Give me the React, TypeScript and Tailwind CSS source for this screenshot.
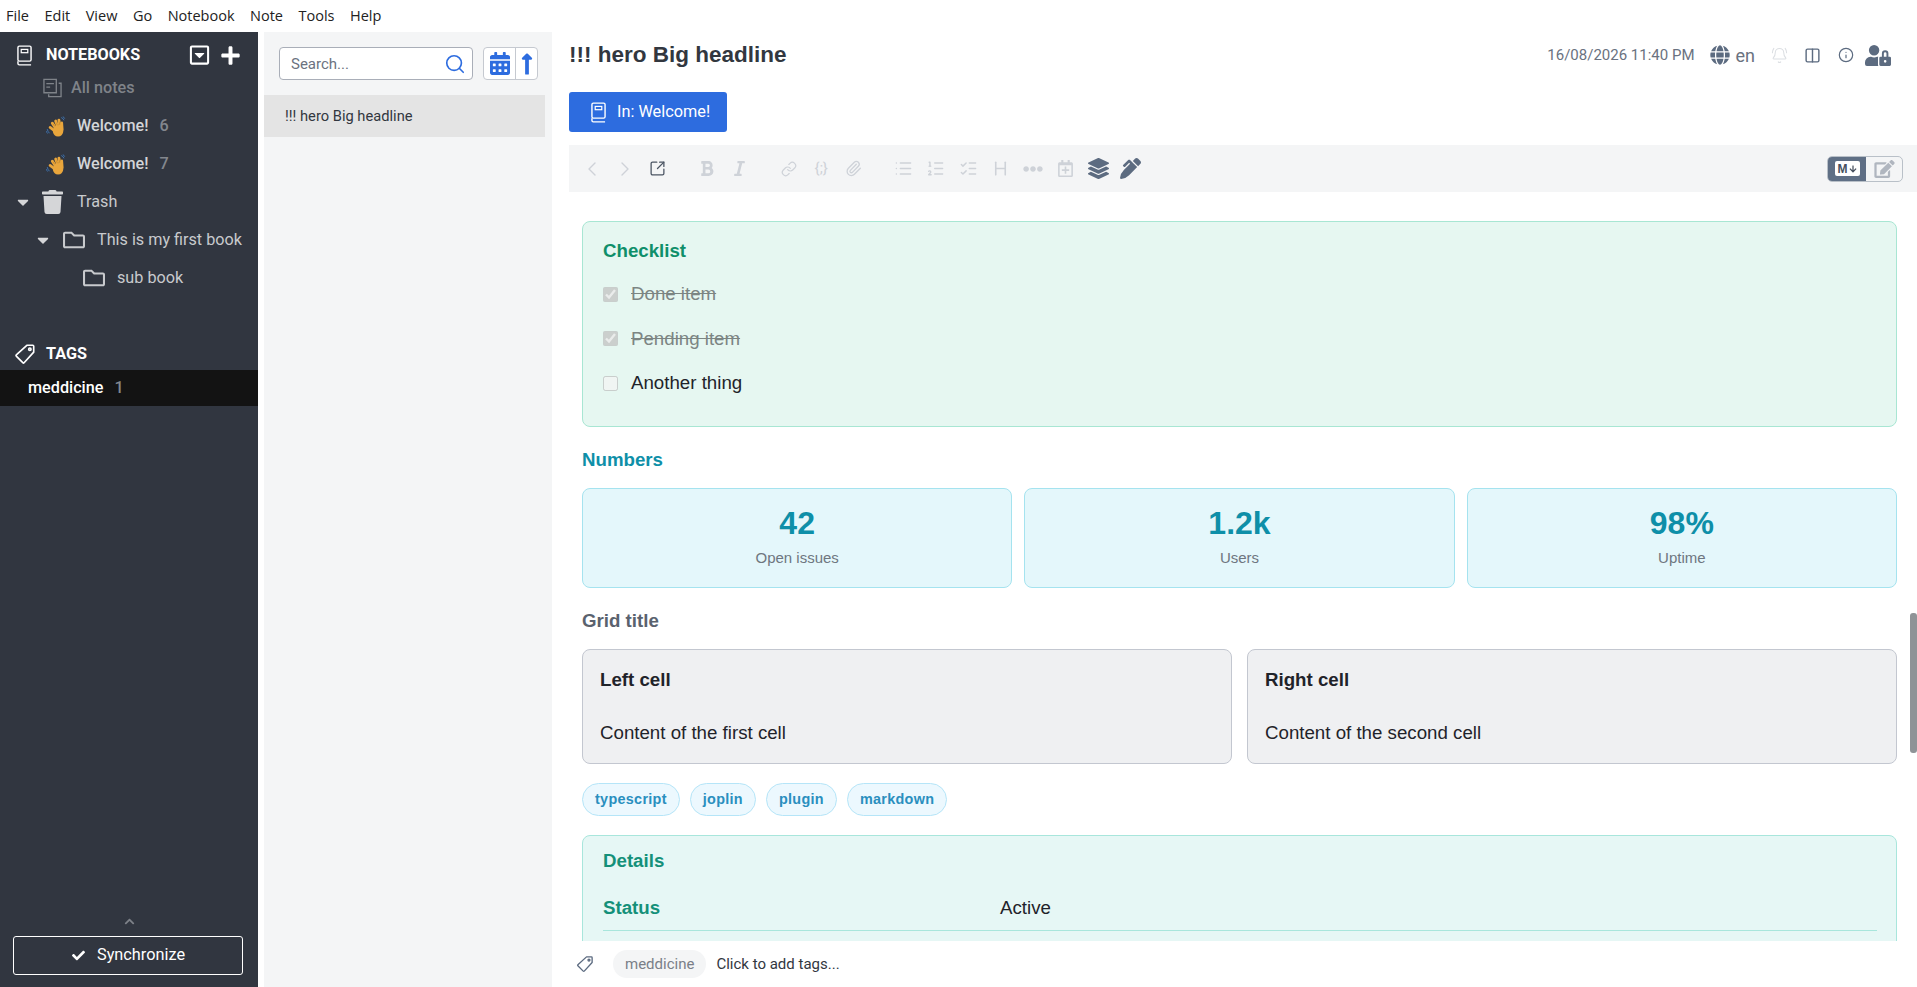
import React from "react";
import { FaCaretDown, FaPlus, FaRegCaretSquareDown, FaTrash, FaRegFolder, FaCheck, FaChevronUp, FaCalendarAlt, FaLongArrowAltUp, FaBold, FaItalic, FaEllipsisH, FaRegCalendarPlus, FaLayerGroup, FaPenAlt, FaGlobe, FaUserLock, FaEdit, FaArrowDown } from "react-icons/fa";
import { Search, ChevronLeft, ChevronRight, SquareArrowOutUpRight, Link, Paperclip, List, ListOrdered, ListChecks, BellRing, Columns2, Info, Heading } from "lucide-react";

const Book = ({ className = "" }: { className?: string }) => (
  <svg viewBox="0 0 16 22" className={className} fill="none" stroke="currentColor" strokeWidth="1.500">
    <rect x="1" y="1" width="14" height="16" rx="1.500" />
    <path d="M1 17v2.500A1.500 1.500 0 0 0 2.500 21H15" />
    <rect x="4.500" y="4.500" width="7" height="3.500" strokeWidth="1.300" />
  </svg>
);

const AllNotes = () => (
  <svg viewBox="0 0 20 20" className="w-[19px] h-[20px] text-[#7f8389]" fill="none" stroke="currentColor" strokeWidth="1.400">
    <path d="M1 1h13v14H1z" />
    <path d="M16.500 5H19v14H6v-2.500" />
    <path d="M3.500 5.500h8M3.500 9h4" strokeWidth="1.300" />
  </svg>
);

const Hand = () => (
  <svg viewBox="0 0 20 20" className="w-[21px] h-[21px]">
    <path d="M1.200 12.500c.3 1.600 1 2.900 2.100 3.900M.3 14.500c.3.900.7 1.600 1.300 2.200" stroke="#3f75b5" strokeWidth=".9" fill="none" />
    <path d="M14.500 1.500c1.300.4 2.200 1.300 2.600 2.600M16 .7c.9.3 1.500.9 1.800 1.800" stroke="#3f75b5" strokeWidth=".9" fill="none" />
    <g stroke="#e9a63c" strokeLinecap="round" fill="none">
      <path d="M8 14 3.900 10.800" strokeWidth="2.600" />
      <path d="M9.500 12 6 6.800" strokeWidth="2.700" />
      <path d="M11.500 11 9.200 4.800" strokeWidth="2.700" />
      <path d="M13.500 11 12.300 4" strokeWidth="2.700" />
      <path d="M15.500 13 15 6.500" strokeWidth="2.500" />
    </g>
    <ellipse cx="11.500" cy="14.300" rx="5" ry="5.200" fill="#e9a63c" />
    <path d="M8.200 9.800 6.800 7.600M10.800 8.800 9.900 6.300M13.100 8.500l-.5-3" stroke="#b97a1c" strokeWidth=".5" fill="none" />
  </svg>
);

const TagOutline = ({ className = "" }: { className?: string }) => (
  <svg viewBox="0 0 24 24" className={className} fill="none" stroke="currentColor" strokeWidth="1.800" strokeLinejoin="round">
    <path d="M14 2.500h6.500a1 1 0 0 1 1 1V10L11 21.500a1 1 0 0 1-1.400 0L2.500 14.400a1 1 0 0 1 0-1.400z" />
    <circle cx="17.300" cy="6.700" r="1.300" />
  </svg>
);

const Item = ({ pl, children, dim }: { pl: string; children: React.ReactNode; dim?: boolean }) => (
  <div className={`flex items-center h-[38px] ${pl} ${dim ? "text-[#7f8389]" : "text-[#c8cacd]"}`}>{children}</div>
);

const Sidebar = () => (
  <aside className="w-[258px] shrink-0 h-full bg-[#313640] flex flex-col text-[16.200px]">
    <div className="flex items-center h-[37px] pt-[9px] pl-[17px] pr-[17px] text-white">
      <Book className="w-[15px] h-[21px]" />
      <span className="ml-[14px] font-bold flex-1">NOTEBOOKS</span>
      <FaRegCaretSquareDown className="w-[21px] h-[22px] mr-[10px]" />
      <FaPlus className="w-[21px] h-[21px]" />
    </div>
    <Item pl="pl-[43px]" dim><AllNotes /><span className="ml-[9px] font-medium">All notes</span></Item>
    <Item pl="pl-[46px]"><Hand /><span className="ml-[10px] font-medium text-[#d3d5d8]">Welcome!</span><span className="ml-[11px] text-[#83878e] font-medium">6</span></Item>
    <Item pl="pl-[46px]"><Hand /><span className="ml-[10px] font-medium text-[#d3d5d8]">Welcome!</span><span className="ml-[11px] text-[#83878e] font-medium">7</span></Item>
    <Item pl="pl-[16px]"><FaCaretDown className="w-[14px] h-[18px] text-[#d5d6d8]" /><FaTrash className="ml-[12px] w-[21px] h-[24px] text-[#d5d6d8]" /><span className="ml-[14px]">Trash</span></Item>
    <Item pl="pl-[36px]"><FaCaretDown className="w-[14px] h-[18px] text-[#d5d6d8]" /><FaRegFolder className="ml-[12px] w-[24px] h-[22px]" /><span className="ml-[11px] whitespace-nowrap">This is my first book</span></Item>
    <Item pl="pl-[82px]"><FaRegFolder className="w-[24px] h-[22px]" /><span className="ml-[11px]">sub book</span></Item>
    <div className="flex items-center h-[38px] mt-[38px] pl-[14px] text-white">
      <TagOutline className="w-[22px] h-[22px]" />
      <span className="ml-[10px] font-bold">TAGS</span>
    </div>
    <div className="flex items-center h-[36px] mt-[-3px] pl-[28px] bg-[#131313] text-white font-medium">
      <span>meddicine</span><span className="ml-[11px] text-[#83878e]">1</span>
    </div>
    <div className="flex-1" />
    <div className="flex justify-center h-[12px] items-center mb-[9px] text-[#7d8188]"><FaChevronUp className="w-[15px] h-[11px]" /></div>
    <div className="mx-[13px] w-[230px] h-[39px] mb-[12px] rounded-[3px] border border-white flex items-center justify-center text-white text-[16.300px]">
      <FaCheck className="w-[15px] h-[13px] mr-[11px]" /><span>Synchronize</span>
    </div>
  </aside>
);

const NoteList = () => (
  <section className="ml-[6px] w-[288px] shrink-0 h-full bg-[#f4f5f6] flex flex-col">
    <div className="flex items-center h-[63px] pl-[15px]">
      <div className="w-[194px] h-[33px] bg-white border border-[#a9aeb8] rounded-[4px] flex items-center pl-[11px] pr-[6px] text-[15px] text-[#6b7280]">
        <span className="flex-1 pt-[1px]">Search...</span>
        <Search className="w-[22px] h-[22px] text-[#2d6cdf]" strokeWidth={1.800} />
      </div>
      <div className="ml-[10px] w-[55px] h-[33px] bg-white border border-[#c5c9d0] rounded-[4px] flex items-center text-[#2d6cdf]">
        <div className="w-[32px] h-full flex items-center justify-center border-r border-[#c5c9d0]"><FaCalendarAlt className="w-[20px] h-[23px]" /></div>
        <div className="flex-1 flex items-center justify-center"><FaLongArrowAltUp className="w-[14px] h-[24px]" /></div>
      </div>
    </div>
    <div className="w-[281px] h-[42px] bg-[#e4e4e4] flex items-center pl-[21px] text-[14.700px] text-[#32373f]">!!! hero Big headline</div>
  </section>
);

const T = ({ children, on, w = "w-[32.500px]" }: { children: React.ReactNode; on?: boolean; w?: string }) => (
  <div className={`${w} flex items-center justify-center shrink-0 ${on ? "text-[#5c6b80]" : "text-[#ced2d8]"}`}>{children}</div>
);

const Toolbar = () => (
  <div className="ml-[17px] h-[47px] bg-[#f4f5f6] flex items-center pl-[7px] pr-[14px]">
    <T><ChevronLeft className="w-[24px] h-[24px]" strokeWidth={1.400} /></T>
    <T><ChevronRight className="w-[24px] h-[24px]" strokeWidth={1.400} /></T>
    <T on><SquareArrowOutUpRight className="w-[17px] h-[17px] text-[#4b5563]" strokeWidth={1.800} /></T>
    <div className="w-[17px]" />
    <T><FaBold className="w-[14px] h-[17px]" /></T>
    <T><FaItalic className="w-[11px] h-[17px]" /></T>
    <div className="w-[17px]" />
    <T><Link className="w-[16px] h-[16px]" strokeWidth={1.800} /></T>
    <T><span className="text-[15px]">{"{;}"}</span></T>
    <T><Paperclip className="w-[17px] h-[17px]" strokeWidth={1.800} /></T>
    <div className="w-[17px]" />
    <T><List className="w-[19px] h-[19px]" strokeWidth={1.800} /></T>
    <T><ListOrdered className="w-[19px] h-[19px]" strokeWidth={1.800} /></T>
    <T><ListChecks className="w-[19px] h-[19px]" strokeWidth={1.800} /></T>
    <T><Heading className="w-[19px] h-[19px]" strokeWidth={2} /></T>
    <T><FaEllipsisH className="w-[20px] h-[20px]" /></T>
    <T><FaRegCalendarPlus className="w-[15px] h-[17px]" /></T>
    <T on><FaLayerGroup className="w-[21px] h-[21px]" /></T>
    <T on><FaPenAlt className="w-[21px] h-[21px]" /></T>
    <div className="flex-1" />
    <div className="flex w-[76px] h-[26px] rounded-[5px] border border-[#b9c0c8] overflow-hidden">
      <div className="w-[38px] bg-[#5f6f85] flex items-center justify-center">
        <div className="w-[25px] h-[15px] bg-white rounded-[2px] flex items-center justify-center text-[#46505e]" style={{ fontFamily: "'Liberation Sans', sans-serif" }}>
          <span className="text-[12px] font-bold leading-none">M</span><FaArrowDown className="w-[8px] h-[8px] ml-[1px]" />
        </div>
      </div>
      <div className="flex-1 flex items-center justify-center text-[#b0b6bf]"><FaEdit className="w-[21px] h-[18px]" /></div>
    </div>
  </div>
);

const Stat = ({ n, l }: { n: string; l: string }) => (
  <div className="h-[100px] bg-[#e4f7fb] border border-[#a5e3ef] rounded-[8px] flex flex-col items-center">
    <div className="h-[62px] pt-[5px] flex items-center text-[32px] font-bold text-[#0e8fa8]">{n}</div>
    <div className="text-[15px] text-[#6e7680] leading-[18px] mt-[-2px]">{l}</div>
  </div>
);

const Cell = ({ t, c }: { t: string; c: string }) => (
  <div className="h-[115px] bg-[#eff0f2] border border-[#c3c7d0] rounded-[8px] px-[17px] text-[#1f232a]">
    <div className="h-[59px] pt-[2px] flex items-center font-bold">{t}</div>
    <div className="h-[36px] flex items-center text-[#1f232a] mt-[6px]">{c}</div>
  </div>
);

const Pill = ({ t }: { t: string }) => (
  <span className="h-[33px] px-[12px] bg-[#ecf8fe] border border-[#b5e5f8] rounded-full flex items-center text-[14.400px] font-bold text-[#2a8fbe] tracking-[0.3px]">{t}</span>
);

const Check = ({ done, t }: { done?: boolean; t: string }) => (
  <div className={`flex items-center h-[44.500px] ${done ? "text-[#7c8583] line-through" : "text-[#1f232a]"}`}>
    <input type="checkbox" checked={!!done} disabled readOnly className="w-[15px] h-[15px] m-0 shrink-0" />
    <span className="ml-[13px]">{t}</span>
  </div>
);

const Viewer = () => (
  <div className="flex-1 min-h-0 overflow-hidden pl-[30px] pr-[20px] pt-[29px] relative text-[18.700px]" style={{ fontFamily: "'Liberation Sans', Arial, sans-serif" }}>
    <div className="h-[206px] bg-[#e6f7f1] border border-[#a8e6d3] rounded-[8px] pl-[20px]">
      <div className="h-[40px] pt-[18px] flex items-center font-bold text-[#0f8f6a]">Checklist</div>
      <div className="mt-[10px]">
        <Check done t="Done item" />
        <Check done t="Pending item" />
        <Check t="Another thing" />
      </div>
    </div>
    <div className="h-[28px] mt-[19px] flex items-center font-bold text-[#0e8fa8]">Numbers</div>
    <div className="grid grid-cols-3 gap-[12px] mt-[14px]">
      <Stat n="42" l="Open issues" />
      <Stat n="1.2k" l="Users" />
      <Stat n="98%" l="Uptime" />
    </div>
    <div className="h-[28px] mt-[19px] flex items-center font-bold text-[#5a626e]">Grid title</div>
    <div className="grid grid-cols-2 gap-[15px] mt-[14px]">
      <Cell t="Left cell" c="Content of the first cell" />
      <Cell t="Right cell" c="Content of the second cell" />
    </div>
    <div className="flex gap-[10px] mt-[19px]">
      <Pill t="typescript" /><Pill t="joplin" /><Pill t="plugin" /><Pill t="markdown" />
    </div>
    <div className="h-[200px] mt-[19px] bg-[#e6f7f5] border border-[#a8e6dc] rounded-t-[8px] pl-[20px] pr-[19px]">
      <div className="h-[51px] flex items-center font-bold text-[#149079]">Details</div>
      <div className="h-[44px] flex items-center border-b border-[#a8e6dc]">
        <span className="w-[397px] font-bold text-[#149079]">Status</span>
        <span className="text-[#1f232a]">Active</span>
      </div>
    </div>
    <div className="absolute right-0 top-[421px] w-[7px] h-[140px] rounded-[3px] bg-[#8f9397]" />
  </div>
);

const Header = () => (
  <div className="h-[46px] flex items-center pl-[17px] pr-[26px]">
    <h1 className="flex-1 text-[22.500px] font-bold text-[#32373f]" style={{ fontFamily: "'Liberation Sans', Arial, sans-serif" }}>!!! hero Big headline</h1>
    <span className="text-[15px] text-[#6a7280]">16/08/2026 11:40 PM</span>
    <FaGlobe className="ml-[15px] w-[20px] h-[20px] text-[#5c6b80]" />
    <span className="ml-[6px] text-[18px] text-[#6a7280]">en</span>
    <BellRing className="ml-[16px] w-[17px] h-[17px] text-[#dcdfe3]" strokeWidth={1.500} />
    <Columns2 className="ml-[16px] w-[17px] h-[17px] text-[#5c6b80]" strokeWidth={2} />
    <Info className="ml-[17px] w-[16px] h-[16px] text-[#5c6b80]" strokeWidth={1.800} />
    <FaUserLock className="ml-[11px] w-[26px] h-[21px] text-[#5c6b80]" />
  </div>
);

const Footer = () => (
  <div className="h-[46px] flex items-center pl-[24px] shrink-0 text-[15px]">
    <TagOutline className="w-[18px] h-[20px] text-[#5c6b80]" />
    <span className="ml-[19px] h-[28px] px-[12px] bg-[#f4f5f6] rounded-full flex items-center text-[#7a7f88]">meddicine</span>
    <span className="ml-[10px] text-[#32373f]">Click to add tags...</span>
  </div>
);

export default function App() {
  return (
    <div className="w-[1917px] h-[987px] overflow-hidden bg-white flex flex-col" style={{ fontFamily: "Roboto, sans-serif" }}>
      <div className="h-[32px] shrink-0 flex items-center text-[14.500px] text-[#222] gap-[15.500px] pl-[6px]" style={{ fontFamily: "'Open Sans', sans-serif" }}>
        {["File", "Edit", "View", "Go", "Notebook", "Note", "Tools", "Help"].map((m) => <span key={m}>{m}</span>)}
      </div>
      <div className="flex flex-1 min-h-0">
        <Sidebar />
        <NoteList />
        <main className="flex-1 min-w-0 flex flex-col">
          <Header />
          <div className="mt-[14px] ml-[17px] w-[158px] h-[40px] bg-[#2d6cdf] rounded-[3px] flex items-center pl-[22px] text-white text-[16.300px]">
            <Book className="w-[15px] h-[21px]" />
            <span className="ml-[11px]">In: Welcome!</span>
          </div>
          <div className="mt-[13px]"><Toolbar /></div>
          <Viewer />
          <Footer />
        </main>
      </div>
    </div>
  );
}
